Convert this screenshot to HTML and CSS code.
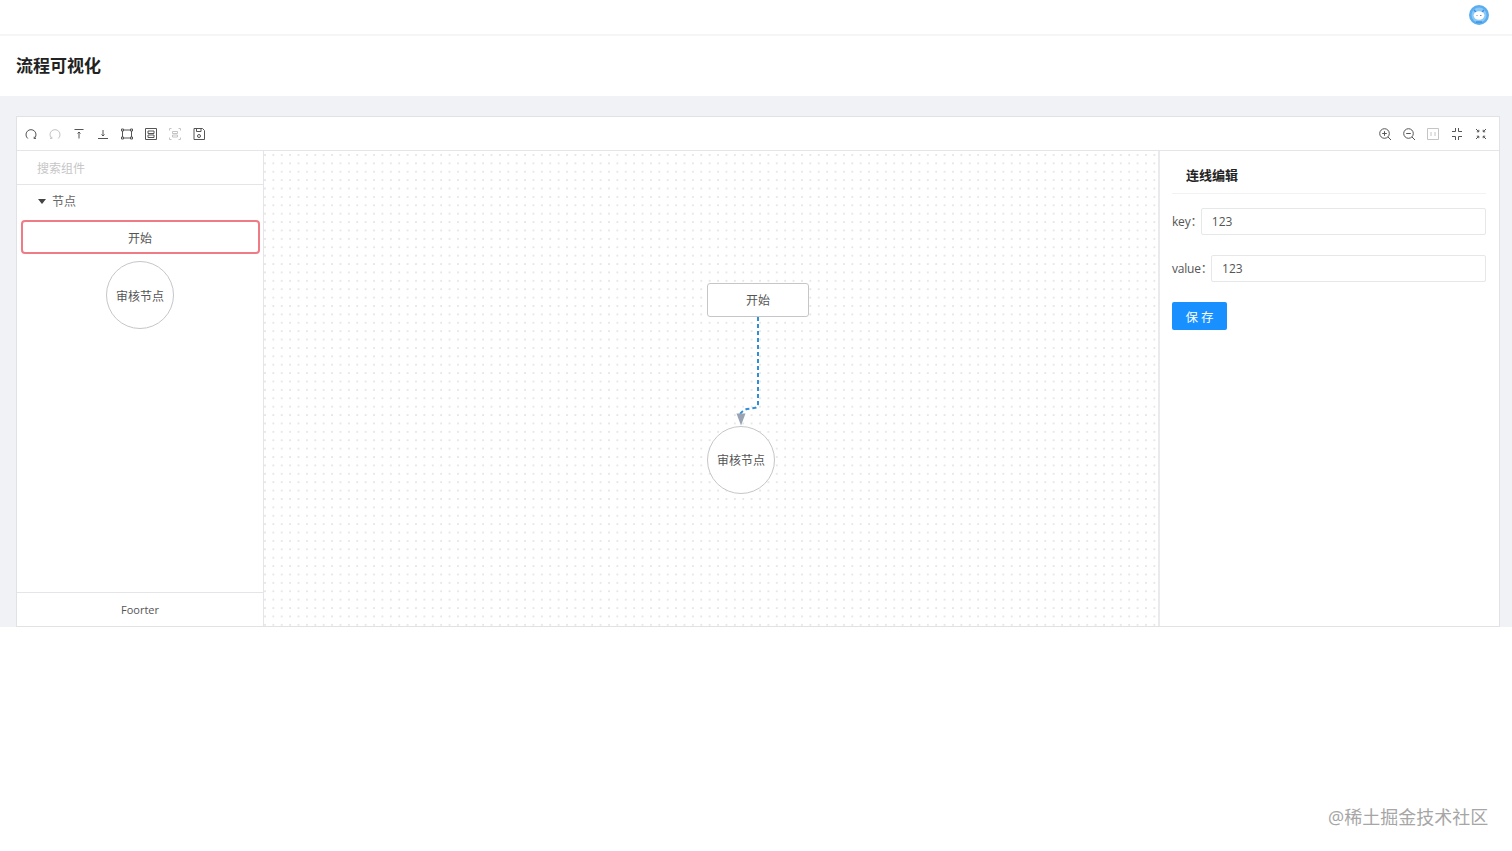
FILE: index.html
```html
<!DOCTYPE html>
<html lang="zh">
<head>
<meta charset="utf-8">
<title>流程可视化</title>
<link rel="stylesheet" href="styles.css">
</head>
<body>
<header class="topbar">
  <svg class="avatar" width="22" height="22" viewBox="0 0 22 22">
    <circle cx="11" cy="11" r="10" fill="#5aaef0"/>
    <circle cx="11" cy="11" r="7.5" fill="#8cc8f5"/>
    <path d="M6 6l2 2M16 6l-2 2" stroke="#3b8fdc" stroke-width="1.4" fill="none"/>
    <ellipse cx="11" cy="11.5" rx="5.4" ry="4.2" fill="#fff"/>
    <path d="M8.5 11.5h1M12 11.5h1.500" stroke="#6d8fae" stroke-width="1"/>
    <path d="M8 18h6" stroke="#2f86d8" stroke-width="1.2"/>
  </svg>
</header>
<section class="titlebar"><h1 class="page-title">流程可视化</h1></section>
<main class="content">
  <div class="editor">
    <div class="toolbar">
      <div class="tool-group">
        <svg class="tool" viewBox="0 0 14 14"><path d="M3.800 11.500A5 5 0 1 1 10.200 11.500M10.200 11.500v-1.800M10.200 11.500h1.700" /></svg>
        <svg class="tool off" viewBox="0 0 14 14"><path d="M3.800 11.500A5 5 0 1 1 10.200 11.500M3.800 11.500v-1.800M3.800 11.500h-1.700"/></svg>
        <svg class="tool" viewBox="0 0 14 14"><path d="M2.500 2.500h9M7 11.500V5M5.500 6.500L7 5l1.500 1.500"/></svg>
        <svg class="tool" viewBox="0 0 14 14"><path d="M2 11.500h10M7 3v6M5.500 7.500L7 9l1.500-1.500"/></svg>
        <svg class="tool" viewBox="0 0 14 14"><path d="M3 3h8M3 11h8M2.500 4v6M11.500 4v6M1.500 2h2v2h-2zM10.500 2h2v2h-2zM1.500 10h2v2h-2zM10.500 10h2v2h-2z"/></svg>
        <svg class="tool" viewBox="0 0 14 14"><path d="M1.500 1.500h11v11h-11zM4 4h6v2.500H4zM4 8h6v2.500H4z"/></svg>
        <svg class="tool off" viewBox="0 0 14 14"><path d="M1.500 3.500v-2h2M10.500 1.500h2v2M12.500 10.500v2h-2M3.500 12.500h-2v-2M4.500 4.500h5v2h-5zM4.500 8h5v2h-5z"/></svg>
        <svg class="tool" viewBox="0 0 14 14"><path d="M2 1.500h8.500L12.500 3.500V12.500H2zM4.500 1.500v3h4.500v-3"/><circle cx="7" cy="9" r="1.500"/></svg>
      </div>
      <div class="tool-group">
        <svg class="tool" viewBox="0 0 14 14"><circle cx="6.500" cy="6.500" r="4.800"/><path d="M10 10l3 3M4.200 6.500h4.600M6.500 4.200v4.600"/></svg>
        <svg class="tool" viewBox="0 0 14 14"><circle cx="6.500" cy="6.500" r="4.800"/><path d="M10 10l3 3M4.200 6.500h4.600"/></svg>
        <svg class="tool off" viewBox="0 0 14 14"><path d="M1.500 1.500h11v11h-11zM5 5v4M9 5v4"/></svg>
        <svg class="tool" viewBox="0 0 14 14"><path d="M5.500 1v3.500H2M8.500 1v3.500H12M5.500 13V9.500H2M8.500 13V9.500H12"/></svg>
        <svg class="tool" viewBox="0 0 14 14"><path d="M2 2L4.800 4.800M4.800 2.800v2H2.800M12 2L9.200 4.800M9.200 2.800v2h2M2 12L4.800 9.200M4.800 11.200v-2H2.800M12 12L9.200 9.200M9.200 11.200v-2h2"/></svg>
      </div>
    </div>
    <div class="workspace">
      <aside class="stencil">
        <div class="stencil-search">搜索组件</div>
        <div class="stencil-group"><span class="caret"></span>节点</div>
        <div class="stencil-items">
          <div class="node-rect node-start">开始</div>
          <div class="node-circle">审核节点</div>
        </div>
        <div class="stencil-footer">Foorter</div>
      </aside>
      <div class="canvas">
        <svg class="edge" width="120" height="130" viewBox="0 0 120 130">
          <path class="edge-line" d="M61 1V88Q61 92 57 92L50 93Q46 94 43 98"/>
          <path class="edge-arrow" d="M39.500 97.500h9l-4.500 12z"/>
        </svg>
        <div class="node-rect canvas-start">开始</div>
        <div class="node-circle canvas-audit">审核节点</div>
      </div>
      <aside class="panel">
        <h2 class="panel-title">连线编辑</h2>
        <div class="form-row"><label class="form-label">key：</label><input class="form-input" value="123"></div>
        <div class="form-row"><label class="form-label">value：</label><input class="form-input" value="123"></div>
        <button class="save-btn">保 存</button>
      </aside>
    </div>
  </div>
</main>
<div class="watermark">@稀土掘金技术社区</div>
</body>
</html>
```
FILE: styles.css
```css
* { box-sizing: border-box; }
html, body { height: 100%; }
body {
  margin: 0;
  background: #fff;
  color: #444;
  font-family: "Open Sans", "Noto Sans CJK SC", sans-serif;
  font-size: 12px;
  overflow: hidden;
}
.topbar {
  height: 36px;
  background: #fff;
  border-bottom: 2px solid #f5f6f8;
  display: flex;
  justify-content: flex-end;
  align-items: flex-start;
  padding: 4px 22px 0 0;
}
.avatar { display: block; }
.titlebar {
  height: 60px;
  background: #fff;
  display: flex;
  align-items: center;
  padding: 0 16px 3px;
}
.page-title {
  margin: 0;
  font-size: 17px;
  font-weight: 700;
  color: #222;
  font-family: "Noto Sans CJK SC", sans-serif;
}
.content {
  height: 531px;
  background: #f0f2f5;
  padding: 20px 12px 0 16px;
}
.editor {
  height: 511px;
  background: #fff;
  border: 1px solid #e0e2e6;
  display: flex;
  flex-direction: column;
}
.toolbar {
  height: 34px;
  flex: none;
  border-bottom: 1px solid #e3e5e8;
  display: flex;
  justify-content: space-between;
  align-items: center;
  padding: 0 11px 0 8px;
}
.tool-group { display: flex; gap: 10px; }
.tool-group:first-child { margin-left: -1px; }
.tool {
  width: 14px;
  height: 14px;
  fill: none;
  stroke: #555;
  stroke-width: 1;
}
.tool.off { stroke: #c4c4c4; }
.workspace { flex: 1; display: flex; min-height: 0; }
.stencil {
  width: 247px;
  flex: none;
  border-right: 1px solid #e3e5e8;
  display: flex;
  flex-direction: column;
}
.stencil-search {
  height: 34px;
  flex: none;
  border-bottom: 1px solid #e3e5e8;
  padding-left: 20px;
  line-height: 35px;
  color: #c6c6c6;
  font-size: 12px;
}
.stencil-group {
  height: 32px;
  flex: none;
  display: flex;
  align-items: center;
  padding-left: 21px;
  color: #666;
  font-size: 12px;
}
.caret {
  width: 0;
  height: 0;
  border-left: 4px solid transparent;
  border-right: 4px solid transparent;
  border-top: 5px solid #444;
  margin-right: 6px;
}
.stencil-items {
  flex: 1;
  display: flex;
  flex-direction: column;
  align-items: center;
  padding-top: 3px;
  gap: 7px;
}
.stencil-items .node-rect,
.stencil-items .node-circle { padding-top: 2px; }
.node-rect {
  height: 34px;
  background: #fff;
  border: 1px solid #c4c6c9;
  border-radius: 3px;
  display: flex;
  align-items: center;
  justify-content: center;
  color: #555;
  font-size: 12px;
}
.node-start {
  width: 239px;
  border: 2px solid #ef7c84;
  border-radius: 4px;
}
.node-circle {
  width: 68px;
  height: 68px;
  background: #fff;
  border: 1px solid #c4c6c9;
  border-radius: 50%;
  display: flex;
  align-items: center;
  justify-content: center;
  color: #555;
  font-size: 12px;
}
.stencil-footer {
  height: 34px;
  flex: none;
  border-top: 1px solid #e3e5e8;
  display: flex;
  align-items: center;
  justify-content: center;
  color: #555;
  font-size: 11px;
}
.canvas {
  flex: 1;
  position: relative;
  background-color: #fff;
  background-image: radial-gradient(circle at 1px 1px, #e6e6e6 0.700px, transparent 1px);
  background-size: 8.400px 8.400px;
  background-position: 0 3px;
}
.edge { position: absolute; left: 433px; top: 165px; }
.edge-line {
  fill: none;
  stroke: #2f8fd6;
  stroke-width: 2;
  stroke-dasharray: 4 3;
}
.edge-arrow { fill: #98a4b3; }
.canvas-start { position: absolute; left: 443px; top: 132px; width: 102px; }
.canvas-audit { position: absolute; left: 443px; top: 275px; }
.panel {
  width: 341px;
  flex: none;
  border-left: 2px solid #e8eaed;
  padding: 0 13px 0 12px;
}
.panel-title {
  margin: 0 0 13px;
  height: 43px;
  border-bottom: 1px solid #f2f2f2;
  padding-left: 14px;
  font-size: 13px;
  line-height: 48px;
  font-weight: 700;
  color: #222;
  font-family: "Noto Sans CJK SC", sans-serif;
}
.form-row {
  display: flex;
  align-items: center;
  height: 28px;
  margin-bottom: 19px;
}
.form-label { color: #555; white-space: nowrap; letter-spacing: -0.200px; margin-right: -1.500px; }
.form-input {
  flex: 1;
  min-width: 0;
  height: 27px;
  border: 1px solid #e6e7e9;
  border-radius: 2px;
  padding: 0 10px;
  font: inherit;
  color: #555;
  outline: none;
}
.save-btn {
  display: block;
  width: 55px;
  height: 28px;
  margin-top: 20px;
  border: none;
  border-radius: 2px;
  background: #1890ff;
  color: #fff;
  font: inherit;
  font-size: 12.500px;
}
.watermark {
  position: absolute;
  left: 1328px;
  top: 805px;
  font-size: 18px;
  line-height: 24px;
  color: #a6a6a6;
  white-space: nowrap;
}
```
